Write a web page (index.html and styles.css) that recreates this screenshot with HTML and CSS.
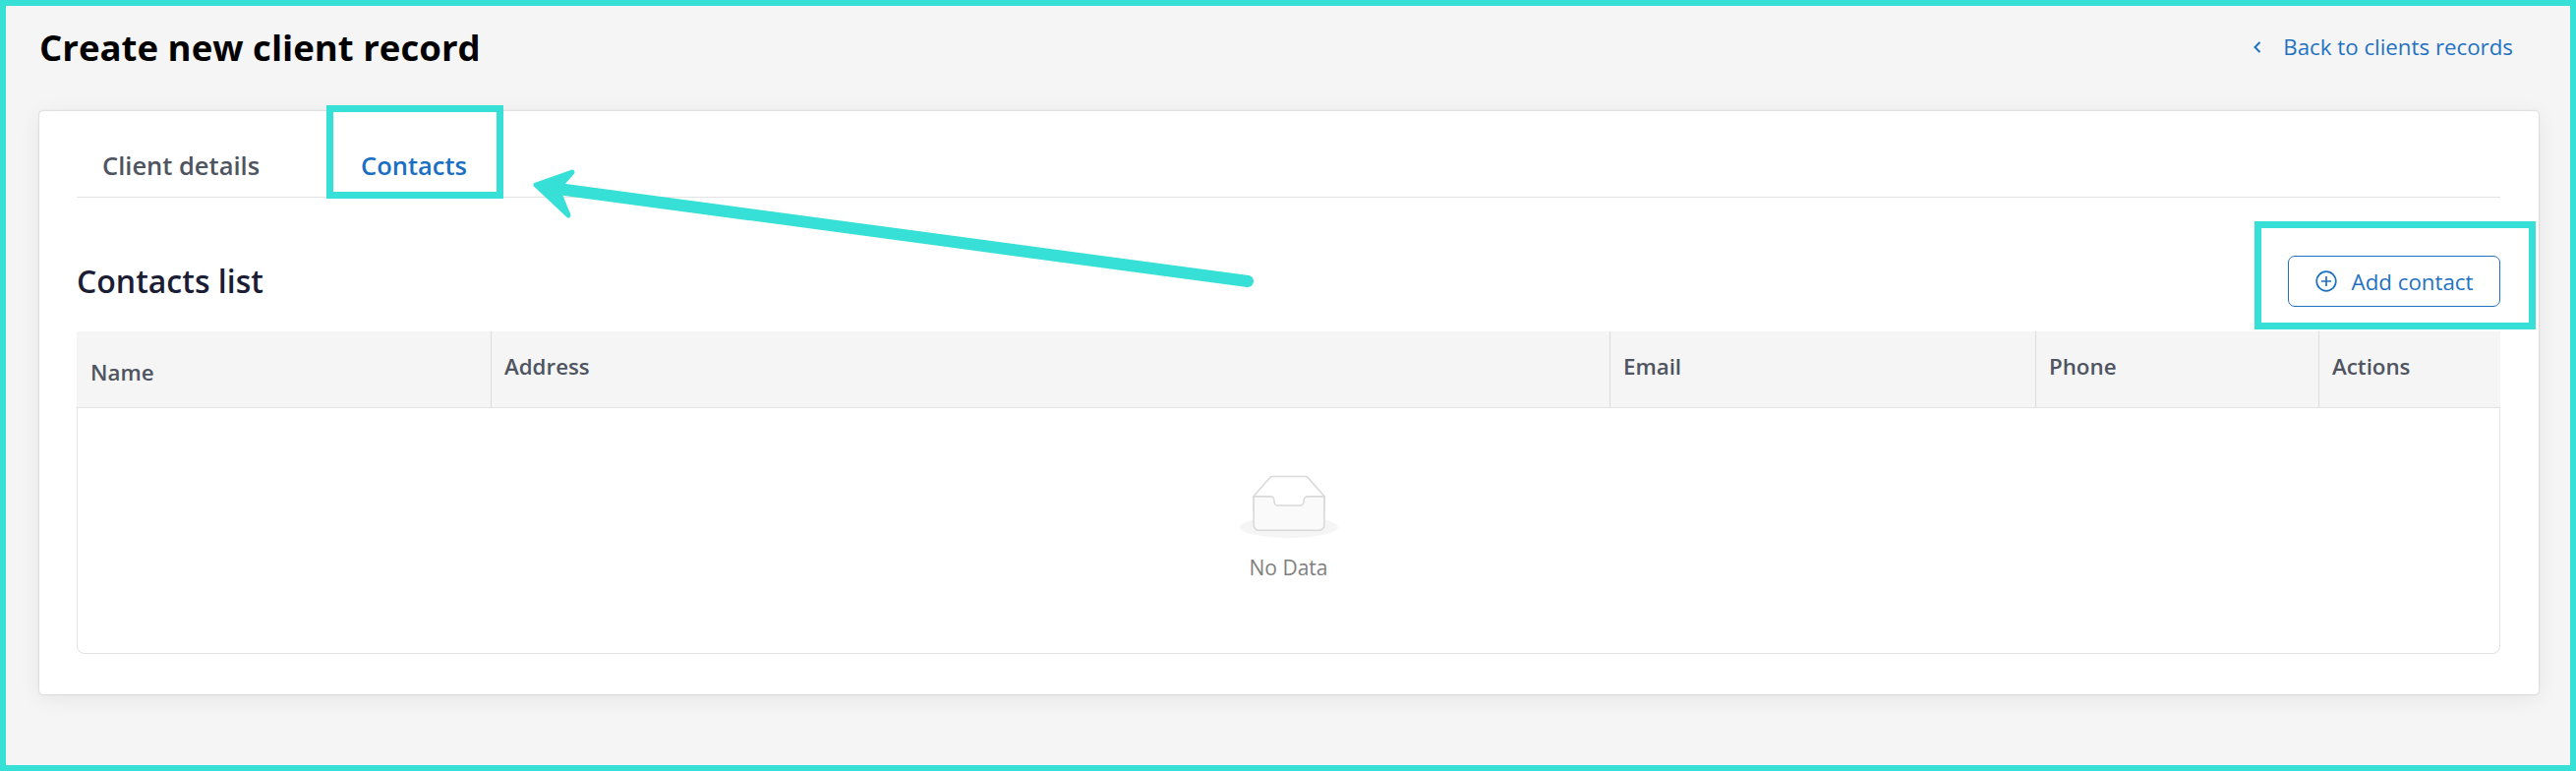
FILE: index.html
```html
<!DOCTYPE html>
<html lang="en">
<head>
<meta charset="utf-8">
<title>Create new client record</title>
<link rel="stylesheet" href="styles.css">
</head>
<body>
<div class="page">
  <header class="top">
    <h1 class="title">Create new client record</h1>
    <a class="back">
      <svg class="back-icon" width="8" height="12" viewBox="0 0 8 12"><path d="M6.5 1 1.5 6l5 5" fill="none" stroke="currentColor" stroke-width="2"/></svg>
      <span>Back to clients records</span>
    </a>
  </header>
  <main class="card">
    <nav class="tabs">
      <span class="tab">Client details</span>
      <span class="tab active">Contacts</span>
    </nav>
    <div class="list-head">
      <h2 class="list-title">Contacts list</h2>
      <button class="add">
        <svg width="22" height="22" viewBox="0 0 22 22"><circle cx="11" cy="11" r="9.8" fill="none" stroke="currentColor" stroke-width="1.7"/><path d="M11 6v10M6 11h10" fill="none" stroke="currentColor" stroke-width="1.7"/></svg>
        <span>Add contact</span>
      </button>
    </div>
    <section class="table">
      <div class="thead">
        <div class="th th-name">Name</div>
        <div class="th">Address</div>
        <div class="th">Email</div>
        <div class="th">Phone</div>
        <div class="th th-last">Actions</div>
      </div>
      <div class="empty">
        <svg class="empty-icon" width="100" height="64" viewBox="0 0 64 41"><g transform="translate(0 1)" fill="none" fill-rule="evenodd"><ellipse fill="#f5f5f5" cx="32" cy="33" rx="32" ry="7"/><g fill-rule="nonzero" stroke="#d9d9d9"><path d="M55 12.76L44.854 1.258C44.367.474 43.656 0 42.907 0H21.093c-.749 0-1.46.474-1.947 1.257L9 12.761V22h46v-9.24z"/><path d="M41.613 15.931c0-1.605.994-2.93 2.227-2.931H55v18.137C55 33.26 53.68 35 52.05 35h-40.1C10.32 35 9 33.259 9 31.137V13h11.16c1.233 0 2.227 1.323 2.227 2.928v.022c0 1.605 1.005 2.901 2.237 2.901h14.752c1.232 0 2.237-1.308 2.237-2.913v-.007z" fill="#fafafa"/></g></g></svg>
        <div class="empty-text">No Data</div>
      </div>
    </section>
  </main>
  <div class="frame"></div>
  <div class="mark mark-tab"></div>
  <div class="mark mark-add"></div>
  <svg class="arrow" width="2620" height="784" viewBox="0 0 2620 784">
    <path d="M1269 286 560 191" fill="none" stroke="#36e0d6" stroke-width="12" stroke-linecap="round"/>
    <path d="M582 175 545 188 578 219 567 192Z" fill="#36e0d6" stroke="#36e0d6" stroke-width="5" stroke-linejoin="round"/>
  </svg>
</div>
</body>
</html>
```
FILE: styles.css
```css
* { box-sizing: border-box; }
html, body { margin: 0; padding: 0; }
body { font-family: "Open Sans", "Noto Sans", sans-serif; background: #f5f5f5; }
.page { position: relative; width: 2620px; height: 784px; padding: 6px 38px 0 40px; overflow: hidden; background: #f5f5f5; }
.top { display: flex; align-items: center; justify-content: space-between; height: 84px; padding: 0 26px 0 0; }
.title { margin: 0; font-size: 36.6px; line-height: 48px; font-weight: 700; color: #000; }
.back { display: flex; align-items: center; gap: 22px; font-size: 22.3px; line-height: 30px; color: #1f72c1; }
.card { height: 593px; margin-top: 23px; padding: 0 39px 0 38px; background: #fff; border-radius: 4px; box-shadow: 0 0 2px rgba(0,0,0,.25), 0 4px 22px rgba(0,0,0,.07); }
.tabs { display: flex; gap: 103px; height: 88px; padding: 36px 0 0 26px; border-bottom: 1px solid #e3e3e3; }
.tab { font-size: 25.5px; line-height: 38px; font-weight: 600; color: #4e5460; }
.tab.active { color: #1b6fc2; }
.list-head { display: flex; align-items: center; justify-content: space-between; height: 136px; padding-top: 34px; }
.list-title { margin: 0; font-size: 32px; line-height: 40px; font-weight: 600; color: #1a1d33; }
.add { display: flex; align-items: center; justify-content: center; gap: 15px; width: 216px; height: 52px; padding: 0; font: inherit; font-size: 22.3px; color: #1f72c1; background: #fff; border: 1px solid #1f72c1; border-radius: 7px; }
.table { height: 328px; border: solid #e3e3e3; border-width: 0 1px 1px; border-radius: 0 0 8px 8px; display: flex; flex-direction: column; }
.thead { display: grid; grid-template-columns: 422px 1138px 433px 288px 184px; height: 78px; margin: 0 -1px; background: #f5f5f5; border-bottom: 1px solid #e3e3e3; }
.th { display: flex; align-items: center; height: 77px; padding: 0 13px 6px; font-size: 22.3px; line-height: 30px; font-weight: 600; color: #4e5460; border-right: 1px solid #d8dcdc; }
.th-name { padding: 6px 14px 0; }
.th-last { border-right: 0; }
.empty { flex: 1; display: flex; flex-direction: column; align-items: center; padding-top: 68px; }
.empty-icon { display: block; }
.empty-text { margin-top: 16px; font-size: 21px; line-height: 28px; color: #808080; }
.frame { position: absolute; inset: 0; border: 6px solid #36e0d6; pointer-events: none; }
.mark { position: absolute; border: 7px solid #36e0d6; pointer-events: none; }
.mark-tab { left: 332px; top: 107px; width: 180px; height: 95px; }
.mark-add { left: 2293px; top: 225px; width: 286px; height: 110px; }
.arrow { position: absolute; left: 0; top: 0; pointer-events: none; }
```
